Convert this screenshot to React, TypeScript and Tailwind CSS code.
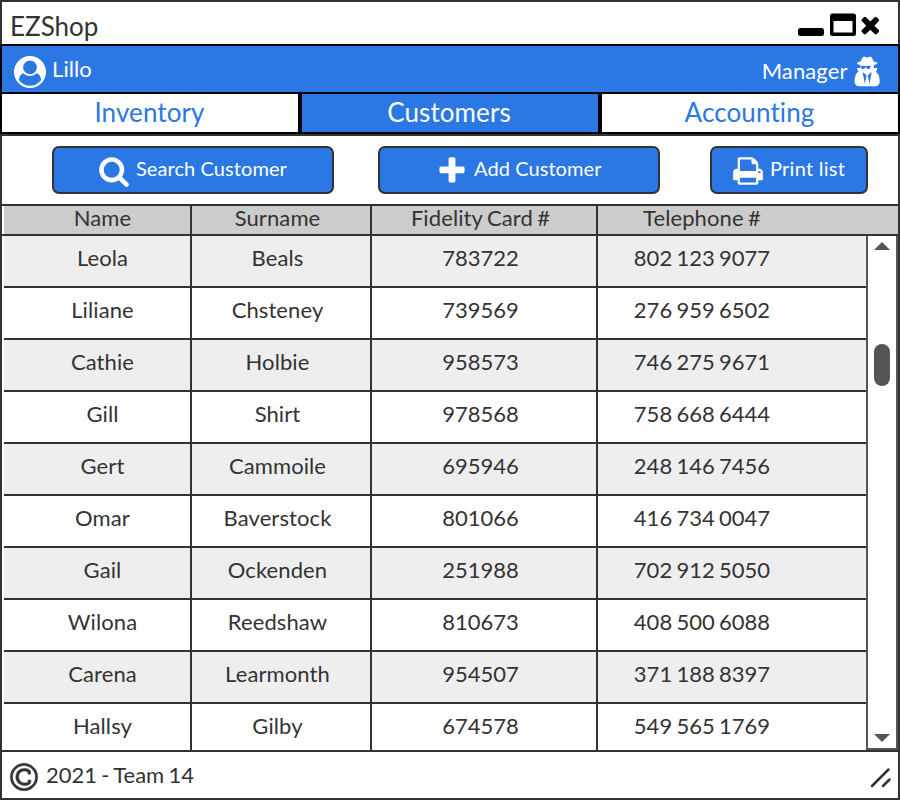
import React from "react";

const icons = {
  user: "M1523 1339q-22-155-87.5-257.5t-184.5-118.5q-67 74-159.5 115.5t-195.5 41.5-195.5-41.5-159.5-115.5q-119 16-184.5 118.5t-87.5 257.5q106 150 271 237.5t356 87.5 356-87.5 271-237.5zm-243-699q0-159-112.5-271.5t-271.5-112.5-271.5 112.5-112.5 271.5 112.5 271.5 271.5 112.5 271.5-112.5 112.5-271.5zm512 256q0 182-71 347.5t-190.5 286-285.5 191.5-349 71-349-71-285.5-191.5-190.5-286-71-347.5 71-348 191-286 286-191 348-71 348 71 286 191 191 286 71 348z",
  secret:
    "M832 1664l96-448-96-128-128-64zm256 0l128-640-128 64-96 128zm80-992q-2-4-4-6-10-8-96-8-70 0-167 19-7 2-21 2t-21-2q-97-19-167-19-86 0-96 8-2 2-4 6 2 18 4 27 2 3 7.5 6.5t7.5 10.5q2 4 7.5 20.5t7 20.5 7.5 17 8.5 17 9 14 12 13.5 14 9.5 17.5 8 20.5 4 24.5 2q36 0 59-12.5t32.5-30 14.5-34.5 11.5-29.5 17.5-12.5h12q11 0 17.5 12.5t11.5 29.5 14.5 34.5 32.5 30 59 12.5q13 0 24.5-2t20.5-4 17.5-8 14-9.5 12-13.5 9-14 8.5-17 7.5-17 7-20.5 7.5-20.5q2-7 7.5-10.5t7.5-6.5q2-9 4-27zm496 873q0 121-73 190t-194 69h-874q-121 0-194-69t-73-190q0-61 4.5-118t19-125.5 37.5-123.5 63.5-103.5 93.5-74.5l-90-220h214q-22-64-22-128 0-12 2-32-194-40-194-96 0-57 210-99 17-62 51.5-134t70.5-114q32-37 76-37 30 0 84 31t84 31 84-31 84-31q44 0 76 37 36 42 70.5 114t51.5 134q210 42 210 99 0 56-194 96 7 81-20 160h214l-82 225q63 33 107.5 96.5t65.5 143.5 29 151.5 8 148.5z",
  search:
    "M1216 832q0-185-131.5-316.5t-316.5-131.5-316.5 131.5-131.5 316.5 131.5 316.5 316.5 131.5 316.5-131.5 131.5-316.5zm512 832q0 52-38 90t-90 38q-54 0-90-38l-343-342q-179 124-399 124-143 0-273.5-55.5t-225-150-150-225-55.5-273.5 55.5-273.5 150-225 225-150 273.5-55.5 273.5 55.5 225 150 150 225 55.5 273.5q0 220-124 399l343 343q37 37 37 90z",
  plus: "M1600 736v192q0 40-28 68t-68 28h-416v416q0 40-28 68t-68 28h-192q-40 0-68-28t-28-68v-416h-416q-40 0-68-28t-28-68v-192q0-40 28-68t68-28h416v-416q0-40 28-68t68-28h192q40 0 68 28t28 68v416h416q40 0 68 28t28 68z",
  print:
    "M448 1536h896v-256h-896v256zm0-640h896v-384h-160q-40 0-68-28t-28-68v-160h-640v640zm1152 64q0-26-19-45t-45-19-45 19-19 45 19 45 45 19 45-19 19-45zm128 0v416q0 13-9.5 22.5t-22.5 9.5h-224v160q0 40-28 68t-68 28h-960q-40 0-68-28t-28-68v-160h-224q-13 0-22.5-9.5t-9.5-22.5v-416q0-79 56.5-135.5t135.5-56.5h64v-544q0-40 28-68t68-28h672q40 0 88 20t76 48l152 152q28 28 48 76t20 88v256h64q79 0 135.5 56.5t56.5 135.5z",
  times:
    "M1490 1322q0 40-28 68l-136 136q-28 28-68 28t-68-28l-294-294-294 294q-28 28-68 28t-68-28l-136-136q-28-28-28-68t28-68l294-294-294-294q-28-28-28-68t28-68l136-136q28-28 68-28t68 28l294 294 294-294q28-28 68-28t68 28l136 136q28 28 28 68t-28 68l-294 294 294 294q28 28 28 68z",
  copyright:
    "M1278 1074v109q0 50-36.5 89t-94 60.5-118 32.5-117.5 11q-205 0-342-139t-137-346q0-203 136-339t339-136q34 0 75.5 4.5t93 18 92.5 34 69 56.5 28 81v109q0 16-16 16h-118q-16 0-16-16v-70q0-43-65.5-67.5t-137.5-24.5q-140 0-228.5 91.5t-88.5 237.5q0 151 91.5 249.5t233.5 98.5q68 0 138-24t70-66v-70q0-7 4.5-11.5t10.5-4.5h119q6 0 11 4.5t5 11.5zm-382-818q-130 0-248.5 51t-204 136.5-136.5 204-51 248.5 51 248.5 136.5 204 204 136.5 248.5 51 248.5-51 204-136.5 136.5-204 51-248.5-51-248.5-136.5-204-204-136.5-248.5-51zm768 640q0 209-103 385.5t-279.5 279.5-385.5 103-385.5-103-279.5-279.5-103-385.5 103-385.5 279.5-279.5 385.5-103 385.5 103 279.5 279.5 103 385.5z",
};

function Icon({ name, className = "" }: { name: keyof typeof icons; className?: string }) {
  return (
    <svg viewBox="0 0 1792 1792" fill="currentColor" className={`size-8 shrink-0 overflow-visible ${className}`}>
      <path d={icons[name]} />
    </svg>
  );
}

const customers = [
  ["Leola", "Beals", "783722", "802 123 9077"],
  ["Liliane", "Chsteney", "739569", "276 959 6502"],
  ["Cathie", "Holbie", "958573", "746 275 9671"],
  ["Gill", "Shirt", "978568", "758 668 6444"],
  ["Gert", "Cammoile", "695946", "248 146 7456"],
  ["Omar", "Baverstock", "801066", "416 734 0047"],
  ["Gail", "Ockenden", "251988", "702 912 5050"],
  ["Wilona", "Reedshaw", "810673", "408 500 6088"],
  ["Carena", "Learmonth", "954507", "371 188 8397"],
  ["Hallsy", "Gilby", "674578", "549 565 1769"],
];

const columnStyles = [
  "w-[188px] border-r-2 pl-[11px] tracking-[0.1px]",
  "w-[180px] border-r-2 pr-[7px] tracking-[0.1px]",
  "w-[226px] border-r-2 pr-[7px]",
  "w-[268px] pr-[60px]",
];

function Cells({ values, className }: { values: string[]; className: string }) {
  return (
    <>
      {values.map((value, i) => (
        <div key={i} className={`flex shrink-0 items-center justify-center border-[#333] ${columnStyles[i]} ${className}`}>
          {value}
        </div>
      ))}
    </>
  );
}

const button =
  "flex h-12 items-start rounded-[7px] border-2 border-[#333] bg-[#2b78e4] text-xl leading-6 tracking-[0.08px] text-white";

export default function App() {
  return (
    <div className="flex h-[800px] w-[900px] flex-col overflow-hidden bg-white font-['Lato',sans-serif] text-[22px] leading-[26px] text-[#333] [font-variant-ligatures:none] [word-spacing:-1.3px]">
      <header className="flex h-11 shrink-0 items-start justify-between border-x-2 border-t-2 border-[#333] pl-2">
        <h1 className="pt-2 text-[26px] leading-8">EZShop</h1>
        <svg viewBox="0 0 84 26" className="mt-[10px] mr-[17px] h-[26px] w-[84px]" fill="#000">
          <rect x="1" y="16" width="26" height="8" rx="2.5" />
          <path
            fillRule="evenodd"
            d="M35.500 1.500h21q2.500 0 2.500 2.500v17.500q0 2.500-2.500 2.500h-21q-2.500 0-2.500-2.500v-17.500q0-2.500 2.500-2.500zM36.500 9v11.500h19v-11.500z"
          />
          <svg x="60" y="-0.6" width="26.600" height="26.600" viewBox="0 0 1792 1792">
            <path d={icons.times} />
          </svg>
        </svg>
      </header>

      <div className="flex h-[50px] shrink-0 justify-between border-2 border-black bg-[#2b78e4] text-white">
        <div className="flex pl-3">
          <Icon name="user" className="mt-[9.5px]" />
          <span className="pt-[10px] pl-[6px] tracking-[0.1px]">Lillo</span>
        </div>
        <div className="flex pr-[16.5px]">
          <span className="pt-3 pr-[2px] tracking-[0.1px]">Manager</span>
          <Icon name="secret" className="mt-2" />
        </div>
      </div>

      <nav className="flex h-10 shrink-0 border-x-2 border-b-2 border-black text-center text-[26px] leading-8 tracking-[0.1px] text-[#2b78e4]">
        <div className="w-[296px] pt-[2px] pr-px">Inventory</div>
        <div className="w-[304px] border-x-4 border-black bg-[#2b78e4] pt-[2px] pr-[2px] text-white">Customers</div>
        <div className="w-[296px] pt-[2px] pr-px">Accounting</div>
      </nav>

      <main className="flex h-[618px] shrink-0 flex-col border-2 border-[#333]">
        <div className="flex h-[68px] shrink-0 items-start pt-[10px] pl-[50px]">
          <button className={`${button} w-[282px] pl-11`}>
            <Icon name="search" className="mt-[6.5px]" />
            <span className="pt-2 pl-[6px]">Search Customer</span>
          </button>
          <button className={`${button} ml-11 w-[282px] pl-[56px]`}>
            <Icon name="plus" className="mt-[6.7px]" />
            <span className="pt-2 pl-[6px]">Add Customer</span>
          </button>
          <button className={`${button} ml-[50px] w-[158px] pl-5`}>
            <Icon name="print" className="mt-[6.5px]" />
            <span className="pt-2 pl-[6px] tracking-[0.25px]">Print list</span>
          </button>
        </div>

        <div className="flex h-8 shrink-0 border-y-2 border-[#333] pl-[2px]">
          <div className="flex w-full bg-[#ccc]">
            <Cells values={["Name", "Surname", "Fidelity Card #", "Telephone #"]} className="pb-[5px] tracking-[0.1px]" />
          </div>
        </div>

        <div className="flex h-[514px] shrink-0 pl-[2px]">
          <div className="w-[862px] shrink-0">
            {customers.map((row, i) => (
              <div
                key={row[0]}
                className={`flex border-[#333] ${i % 2 ? "bg-white" : "bg-[#eee]"} ${
                  i === customers.length - 1 ? "h-[46px]" : "h-[52px] border-b-2"
                }`}
              >
                <Cells values={row} className={i === customers.length - 1 ? "pb-[3px]" : "pb-[7px]"} />
              </div>
            ))}
          </div>
          <div className="flex w-8 shrink-0 flex-col items-center border-x-2 border-b-2 border-[#555] bg-white pt-[6px]">
            <svg viewBox="0 0 16 8" className="h-2 w-4 shrink-0" fill="#555">
              <path d="M0 8L8 0l8 8z" />
            </svg>
            <div className="mt-[94px] h-[42px] w-4 shrink-0 rounded-full bg-[#555]" />
            <svg viewBox="0 0 16 8" className="mt-auto mb-[6px] h-2 w-4 shrink-0" fill="#555">
              <path d="M0 0l8 8 8-8z" />
            </svg>
          </div>
        </div>
      </main>

      <footer className="flex h-12 shrink-0 border-x-2 border-b-2 border-[#333] pl-[6px]">
        <Icon name="copyright" className="mt-[9px] stroke-current [stroke-width:28]" />
        <span className="pt-[10px] pl-[6px]">2021 - Team 14</span>
        <svg viewBox="0 0 22 22" className="mt-[14px] mr-[6px] ml-auto size-[22px]" fill="none" stroke="#333" strokeWidth="2.5" strokeLinecap="round">
          <path d="M2 20L18.500 3.500M13 20l6.500-6.500" />
        </svg>
      </footer>
    </div>
  );
}
